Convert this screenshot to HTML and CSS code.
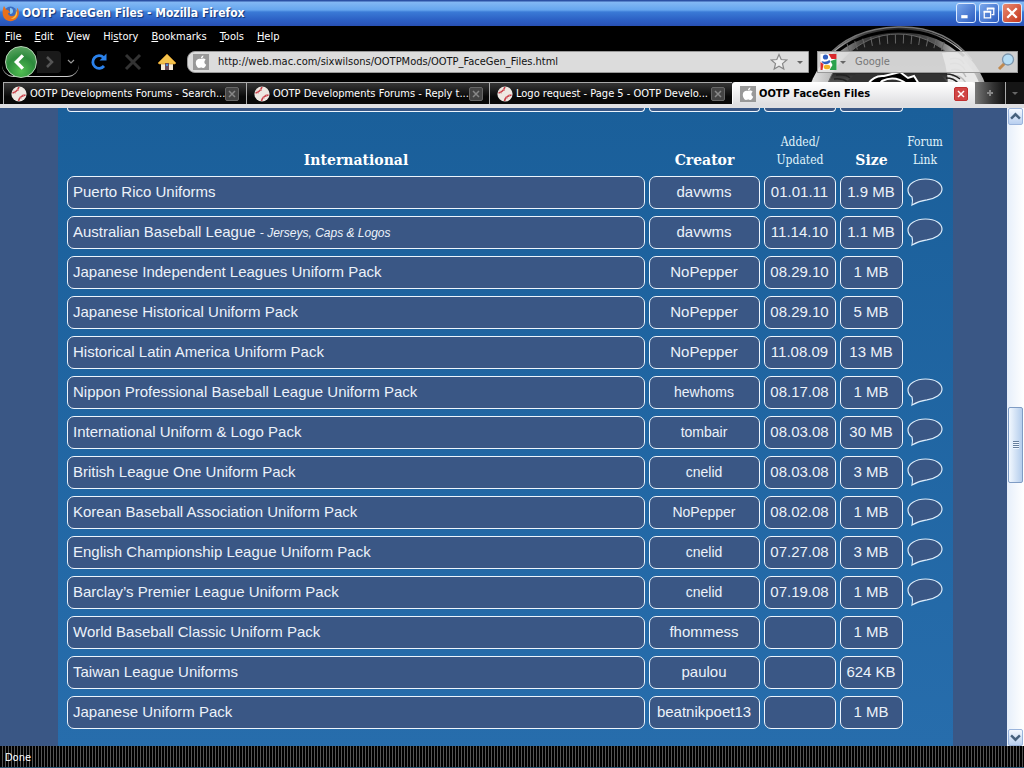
FILE: index.html
```
<!DOCTYPE html>
<html lang="en">
<head>
<meta charset="utf-8">
<title>OOTP FaceGen Files</title>
<link rel="stylesheet" href="styles.css">
</head>
<body>
<svg class="defs" aria-hidden="true">
  <symbol id="ball" viewBox="0 0 16 16"><circle cx="8" cy="8" r="7.6" fill="#eee8e2"/><path d="M1.500 7Q6 6 8 1M7.500 15Q8.500 10 14.500 9" fill="none" stroke="#c8404a" stroke-width="1.600"/><path d="M3 4.500l1.500 3M6 3l2 2M9 10l1.500 2.500M12 8l.8 2.500" stroke="#d88" stroke-width=".8"/></symbol>
  <symbol id="apple" viewBox="0 0 16 16"><rect width="16" height="16" fill="#999"/><path d="M8 5c1-.6 3.600-1 4.700.8-2 1.300-1.600 4 .5 4.900C12.500 12.500 11.500 14 10.300 14c-.9 0-1.300-.5-2.200-.5s-1.400.5-2.200.5C4.200 14 2.700 11 2.800 8.600 3 5 6 4.200 8 5zM8 4.300C7.900 2.800 9 1.600 10.400 1.400 10.500 3 9.400 4.200 8 4.300z" fill="#fff"/></symbol>
  <symbol id="bubble" viewBox="0 0 36 29"><path d="M5 27C5.600 24 5.800 21.500 5 19 2.500 17.300 1 15 1 12 1 6 8.500 1 18.500 1S35 5.500 35 11 28.500 20.500 20 21.800C14 22.500 9.500 24.300 5 27z" fill="#3a5785" stroke="#dcecfa" stroke-width="1.200"/></symbol>
</svg>
<div class="window">
  <header class="titlebar">
    <svg class="logo" viewBox="0 0 17 17"><circle cx="8.500" cy="8" r="6.500" fill="#3c6cc0"/><path d="M8 3q3 0 3 3t-3 3" fill="#8cc8f0"/><path d="M2 1C0 5 0 11 3 14s9 3 12-1 2-9 0-10c.6 4-.5 7-4 8-3 .6-5-1-5-3l2.500-.5L6 5 4 4.500z" fill="#e8701c"/><path d="M13.500 4c1.500 5-1 9-5 9.500 4 1.500 7-2 6.500-6z" fill="#fcc040"/></svg>
    <h1 class="title">OOTP FaceGen Files - Mozilla Firefox</h1>
    <button class="winbtn" aria-label="Minimize"><svg viewBox="0 0 17 17"><path d="M4 12h6" stroke="#fff" stroke-width="3"/></svg></button>
    <button class="winbtn" aria-label="Restore"><svg viewBox="0 0 17 17"><path d="M7 6V4h6v6h-2M4 7h6v6H4z" fill="none" stroke="#fff" stroke-width="1.200"/><path d="M3.500 7.500h7M6.500 4.500h7" stroke="#fff" stroke-width="1.600"/></svg></button>
    <button class="winbtn close" aria-label="Close"><svg viewBox="0 0 17 17"><path d="M4 4l9 9M13 4l-9 9" stroke="#fff" stroke-width="2.200"/></svg></button>
  </header>
  <div class="chrome">
    <svg class="persona" viewBox="0 0 224 78" aria-hidden="true">
      <defs>
        <linearGradient id="rim" x1="0" x2="1" y1="0" y2="0"><stop offset="0" stop-color="#eee"/><stop offset=".14" stop-color="#bbb"/><stop offset=".3" stop-color="#444"/><stop offset=".5" stop-color="#222"/><stop offset=".7" stop-color="#555"/><stop offset=".85" stop-color="#ddd"/><stop offset="1" stop-color="#999"/></linearGradient>
        <linearGradient id="dome" x1="0" x2="0" y1="0" y2="1"><stop offset="0" stop-color="#161616"/><stop offset=".25" stop-color="#2c2c2c"/><stop offset=".4" stop-color="#aaa"/><stop offset="1" stop-color="#ccc"/></linearGradient>
      </defs>
      <ellipse cx="98" cy="84" rx="92" ry="83" fill="url(#rim)"/>
      <path d="M24 34Q50 2 98 1T172 34" fill="none" stroke="#777" stroke-width="1.500"/>
      <path d="M32 30Q58 6 98 5T164 30" fill="none" stroke="#000" stroke-width="3"/>
      <ellipse cx="98" cy="88" rx="76" ry="80" fill="url(#dome)" stroke="#666"/>
      <path d="M48 22Q72 13 98 13T148 22" fill="none" stroke="#666" stroke-width="9" stroke-dasharray="1 7"/>
      <path d="M142 27Q160 24 164 34Q182 52 184 78H148Q150 50 142 27z" fill="#e8e8e8"/>
      <path d="M150 33q10-3 14 5M150 38q10-3 15 6M151 44q10-3 15 7M152 50q9-2 14 7" fill="none" stroke="#bbb" stroke-width="1.500"/>
      <path d="M36 49q10-1 14 3M34 53q8-1 14 3M146 48q8 0 14 5M146 52q8 0 12 5" fill="none" stroke="#222" stroke-width="1.500"/>
      <path d="M56 48h84l8 9H44z" fill="#333"/>
      <path d="M68 58Q74 49 84 50L100 46 108 52 114 50 119 58H107Q95 49 82 55L76 62z" fill="#000" stroke="#fff" stroke-width="2"/>
    </svg>
    <nav class="menu">
      <button><u>F</u>ile</button><button><u>E</u>dit</button><button><u>V</u>iew</button><button>Hi<u>s</u>tory</button><button><u>B</u>ookmarks</button><button><u>T</u>ools</button><button><u>H</u>elp</button>
    </nav>
    <div class="toolbar">
      <div class="history">
        <button class="back" aria-label="Back"><svg viewBox="0 0 32 32"><path d="M18 9l-7 7 7 7" fill="none" stroke="#fff" stroke-width="3.500"/></svg></button>
        <button class="fwd" aria-label="Forward"><svg viewBox="0 0 24 22"><path d="M10 6l5 5-5 5" fill="none" stroke="#555" stroke-width="2.500"/></svg></button>
        <button class="hist" aria-label="Recent pages"><svg viewBox="0 0 8 8"><path d="M1 2l3 3 3-3" fill="none" stroke="#999" stroke-width="1.200"/></svg></button>
      </div>
      <button class="tool" aria-label="Reload"><svg viewBox="0 0 18 18"><path d="M14 13A6.300 6.300 0 1 1 13.500 4.500" fill="none" stroke="#2b82ec" stroke-width="2.800"/><path d="M9.500 7.500h7V.5z" fill="#2b82ec"/></svg></button>
      <button class="tool" aria-label="Stop"><svg viewBox="0 0 18 18"><path d="M2 2l14 14M16 2L2 16" stroke="#333" stroke-width="3"/></svg></button>
      <button class="tool" aria-label="Home"><svg viewBox="0 0 18 18"><path d="M3 9h12v8H3z" fill="#f4ead8"/><path d="M0 10l9-9 9 9-1 1H1z" fill="#f4c24c" stroke="#c98a20" stroke-width=".6"/><path d="M7 10h4v7H7z" fill="#6a4a5a"/><path d="M8 11h2v2H8z" fill="#4a90d8"/></svg></button>
      <div class="urlbox">
        <svg class="site"><use href="#apple"/></svg>
        <input class="url" aria-label="Address" value="http://web.mac.com/sixwilsons/OOTPMods/OOTP_FaceGen_Files.html">
        <button class="star" aria-label="Bookmark"><svg viewBox="0 0 18 18"><path d="M9 1.500l2.200 5 5.500.5-4.200 3.600 1.300 5.400L9 13.200 4.200 16l1.300-5.400L1.300 7l5.500-.5z" fill="#eee" stroke="#888" stroke-width="1.200"/></svg></button>
        <button class="drop" aria-label="Show history"></button>
      </div>
      <div class="searchbox">
        <svg class="google" viewBox="0 0 16 16"><rect width="16" height="16" fill="#fff"/><path d="M8 0h8v5h-5z" fill="#d8282c"/><path d="M16 5v11H9l3-5-2-4z" fill="#2ba24c"/><path d="M0 8l3 2-1 6H0z" fill="#e03030"/><circle cx="5" cy="3" r="2.600" fill="#3160c0"/><path d="M1 7q4 2 8-1l1 2q-4 4-8 1z" fill="#3160c0"/><ellipse cx="6.500" cy="13" rx="3.300" ry="2.300" fill="#f0b428"/></svg>
        <button class="drop" aria-label="Choose engine"></button>
        <input class="query" aria-label="Search" placeholder="Google">
        <button class="go" aria-label="Search now"><svg viewBox="0 0 18 18"><path d="M2 16l6-6" stroke="#c08a50" stroke-width="3"/><circle cx="11" cy="6.500" r="5.500" fill="#b4dcf4" stroke="#7c95ac" stroke-width="1.300"/></svg></button>
      </div>
    </div>
    <div class="tabs">
      <div class="tab"><svg class="fav"><use href="#ball"/></svg><span>OOTP Developments Forums - Search...</span><button class="x" aria-label="Close tab"><svg viewBox="0 0 8 8"><path d="M1 1l6 6M7 1L1 7"/></svg></button></div>
      <div class="tab"><svg class="fav"><use href="#ball"/></svg><span>OOTP Developments Forums - Reply t...</span><button class="x" aria-label="Close tab"><svg viewBox="0 0 8 8"><path d="M1 1l6 6M7 1L1 7"/></svg></button></div>
      <div class="tab"><svg class="fav"><use href="#ball"/></svg><span>Logo request - Page 5 - OOTP Develo...</span><button class="x" aria-label="Close tab"><svg viewBox="0 0 8 8"><path d="M1 1l6 6M7 1L1 7"/></svg></button></div>
      <div class="tab active"><svg class="fav"><use href="#apple"/></svg><span>OOTP FaceGen Files</span><button class="x" aria-label="Close tab"><svg viewBox="0 0 8 8"><path d="M1 1l6 6M7 1L1 7"/></svg></button></div>
      <button class="newtab" aria-label="New tab"><svg viewBox="0 0 8 8"><path d="M4 1v6M1 4h6" stroke="#888" stroke-width="2"/></svg></button>
      <button class="alltabs drop" aria-label="List all tabs"></button>
    </div>
  </div>
  <div class="view">
    <main class="page">
      <div class="panel">
        <table class="files">
          <colgroup><col><col class="c-creator"><col class="c-date"><col class="c-size"><col class="c-link"></colgroup>
          <tbody><tr class="previous"><td></td><td></td><td></td><td></td><td class="bare"></td></tr></tbody>
          <tbody id="rows">
            <tr class="heads"><th>International</th><th>Creator</th><th class="small">Added/<br>Updated</th><th>Size</th><th class="small">Forum<br>Link</th></tr>
            <tr><td>Puerto Rico Uniforms</td><td>davwms</td><td>01.01.11</td><td>1.9 MB</td><td class="bare"><a href="#rows" aria-label="Forum"><svg><use href="#bubble"/></svg></a></td></tr>
            <tr><td>Australian Baseball League <em>- Jerseys, Caps &amp; Logos</em></td><td>davwms</td><td>11.14.10</td><td>1.1 MB</td><td class="bare"><a href="#rows" aria-label="Forum"><svg><use href="#bubble"/></svg></a></td></tr>
            <tr><td>Japanese Independent Leagues Uniform Pack</td><td>NoPepper</td><td>08.29.10</td><td>1 MB</td><td class="bare"></td></tr>
            <tr><td>Japanese Historical Uniform Pack</td><td>NoPepper</td><td>08.29.10</td><td>5 MB</td><td class="bare"></td></tr>
            <tr><td>Historical Latin America Uniform Pack</td><td>NoPepper</td><td>11.08.09</td><td>13 MB</td><td class="bare"></td></tr>
            <tr><td>Nippon Professional Baseball League Uniform Pack</td><td class="sm">hewhoms</td><td>08.17.08</td><td>1 MB</td><td class="bare"><a href="#rows" aria-label="Forum"><svg><use href="#bubble"/></svg></a></td></tr>
            <tr><td>International Uniform &amp; Logo Pack</td><td class="sm">tombair</td><td>08.03.08</td><td>30 MB</td><td class="bare"><a href="#rows" aria-label="Forum"><svg><use href="#bubble"/></svg></a></td></tr>
            <tr><td>British League One Uniform Pack</td><td class="sm">cnelid</td><td>08.03.08</td><td>3 MB</td><td class="bare"><a href="#rows" aria-label="Forum"><svg><use href="#bubble"/></svg></a></td></tr>
            <tr><td>Korean Baseball Association Uniform Pack</td><td class="sm">NoPepper</td><td>08.02.08</td><td>1 MB</td><td class="bare"><a href="#rows" aria-label="Forum"><svg><use href="#bubble"/></svg></a></td></tr>
            <tr><td>English Championship League Uniform Pack</td><td class="sm">cnelid</td><td>07.27.08</td><td>3 MB</td><td class="bare"><a href="#rows" aria-label="Forum"><svg><use href="#bubble"/></svg></a></td></tr>
            <tr><td>Barclay’s Premier League Uniform Pack</td><td class="sm">cnelid</td><td>07.19.08</td><td>1 MB</td><td class="bare"><a href="#rows" aria-label="Forum"><svg><use href="#bubble"/></svg></a></td></tr>
            <tr><td>World Baseball Classic Uniform Pack</td><td>fhommess</td><td></td><td>1 MB</td><td class="bare"></td></tr>
            <tr><td>Taiwan League Uniforms</td><td>paulou</td><td></td><td>624 KB</td><td class="bare"></td></tr>
            <tr><td>Japanese Uniform Pack</td><td>beatnikpoet13</td><td></td><td>1 MB</td><td class="bare"></td></tr>
          </tbody>
        </table>
      </div>
    </main>
    <div class="scroll">
      <button class="arrow" aria-label="Scroll up"><svg viewBox="0 0 10 10"><path d="M1 7l4-4 4 4"/></svg></button>
      <div class="gap-top"></div>
      <div class="thumb"><i></i></div>
      <div class="gap-bottom"></div>
      <button class="arrow" aria-label="Scroll down"><svg viewBox="0 0 10 10"><path d="M1 3l4 4 4-4"/></svg></button>
    </div>
  </div>
  <footer class="status">Done</footer>
</div>
</body>
</html>
```
FILE: styles.css
```
* { box-sizing: border-box; }
body { margin: 0; font: 11px/14px "DejaVu Sans Condensed", "DejaVu Sans", sans-serif; color: #fff; }
button { padding: 0; border: 0; background: none; color: inherit; font: inherit; }
button svg { display: block; }
input { min-width: 0; padding: 0; border: 0; background: none; font: inherit; }
.defs { position: absolute; width: 0; height: 0; }
.window { display: flex; flex-direction: column; height: 100vh; overflow: hidden; background: #000; }

.titlebar { display: flex; align-items: center; gap: 2px; height: 26px; flex: none; padding: 0 2px; background: linear-gradient(#2b50a4 0 1px, #83b8f4 2px, #65a5ee 10px, #3a7ad6 12px, #2c60c4 20px, #2850b4); }
.logo { width: 17px; height: 17px; flex: none; }
.title { flex: 1; margin: 0; padding-left: 1px; font: bold 12px/16px "DejaVu Sans Condensed", sans-serif; text-shadow: 1px 1px 1px #123478; }
.winbtn { width: 20px; height: 20px; margin-left: 1px; border: 1px solid #dceaff; border-radius: 3px; background: linear-gradient(135deg, #7aa8ec, #2c5cc0); }
.winbtn.close { background: linear-gradient(135deg, #e88a70, #c4361c); }

.chrome { position: relative; flex: none; border-bottom: 4px solid #dfdfe2; background: #000; }
.persona { position: absolute; right: 0; top: 0; width: 224px; height: 78px; }
.menu, .toolbar, .tabs { position: relative; display: flex; }
.menu { gap: 13px; height: 20px; padding: 1px 5px 0; align-items: center; }
.toolbar { align-items: center; height: 32px; padding: 0 6px 0 2px; }
.history { display: flex; align-items: center; width: 77px; height: 30px; border: solid #ccc; border-width: 0 0 1px; border-radius: 4px 4px 12px 12px; margin-right: 11px; }
.back { width: 32px; height: 32px; flex: none; margin-left: 3px; border: 1px solid #b8d8b8; border-radius: 50%; background: radial-gradient(circle at 50% 80%, #52c052, #2c8a3c 50%, #6cae70); }
.fwd { width: 24px; height: 22px; background: #1a1a1a; border-radius: 0 4px 4px 0; }
.hist { width: 8px; margin-left: 6px; }
.tool { width: 18px; margin-right: 16px; flex: none; }
.urlbox, .searchbox { display: flex; align-items: center; height: 22px; border: 1px solid #999; background: #dcdcdc; color: #000; }
.urlbox { flex: 1; margin-left: -5px; padding: 0 5px; border-radius: 8px 0 0 8px; }
.site { width: 16px; height: 16px; flex: none; margin-right: 9px; }
.url { flex: 1; color: #111; }
.star { width: 18px; margin-right: 9px; }
.drop::before { content: ""; display: block; width: 0; margin: 0 auto; border: 3px solid transparent; border-top-color: #666; border-bottom: 0; }
.searchbox { width: 201px; flex: none; margin-left: 8px; padding: 0 2px; background: #e4e4e4e6; }
.google { width: 17px; height: 16px; flex: none; margin-right: 3px; }
.query { flex: 1; margin-left: 9px; }
.query::placeholder { color: #777; opacity: 1; }
.go { width: 18px; }

.tabs { height: 26px; padding: 4px 0 0 3px; }
.tab { display: flex; align-items: center; flex: 1; min-width: 0; height: 22px; padding: 0 7px; border: solid #aaa; border-width: 1px 0 0 1px; background: linear-gradient(#363636, #080808 65%); white-space: nowrap; }
.fav { width: 16px; height: 16px; flex: none; margin-right: 3px; }
.tab span { flex: 1; }
.x { width: 14px; height: 14px; flex: none; padding: 2px; border: 1px solid #666; border-radius: 2px; background: #444; }
.x path { fill: none; stroke: #888; stroke-width: 1.500; }
.tab.active { border-color: #fff; border-radius: 3px 3px 0 0; background: linear-gradient(#fff, #dfdfe2); color: #000; font-weight: bold; }
.active .x { border-color: #c03030; background: #d04545; }
.active .x path { stroke: #fff; }
.newtab { display: grid; place-items: center; width: 31px; background: linear-gradient(90deg, #777, #333 60%, #111); border-right: 1px solid #aaa; }
.newtab svg { width: 8px; }
.alltabs { width: 18px; background: #151515; }

.view { display: flex; flex: 1; min-height: 0; }
.page { flex: 1; min-width: 0; overflow: hidden; padding: 0 54px 0 58px; background: #3a5785; }
.panel { display: flow-root; height: 100%; padding: 0 6px 0 5px; background: linear-gradient(#1a5f9a, #276dac); }
.files { width: 100%; margin-top: -7px; table-layout: fixed; border-collapse: separate; border-spacing: 4px 7px; color: #ecf2fa; font: 15px/17px "Liberation Sans", Arial, sans-serif; text-align: center; }
.c-creator { width: 111px; }
.c-date { width: 72px; }
.c-size { width: 63px; }
.c-link { width: 36px; }
.files td { height: 33px; padding: 0 1px 2px 0; border: 1px solid #ecf4fc; border-radius: 7px; background: #3a5785; white-space: nowrap; }
.files td:first-child { padding-left: 5px; text-align: left; }
.files td.bare { padding: 0; border: 0; background: none; }
.files td.sm { padding-bottom: 1px; font-size: 14px; }
.files em { font-size: 12px; line-height: 14px; }
.files .previous td { height: 4px; padding: 0; border-top: 0; border-radius: 0 0 5px 5px; }
.files th { height: 50px; padding: 0; vertical-align: bottom; color: #fff; font: bold 14px/18px "DejaVu Serif", serif; }
.files th.small { font: 12px/18px "DejaVu Serif Condensed", "DejaVu Serif", serif; color: #e0f4fa; white-space: nowrap; }
.bare a, .bare svg { display: block; width: 36px; height: 29px; }

.scroll { display: flex; flex-direction: column; width: 17px; flex: none; padding: 0 1px; background: linear-gradient(90deg, #e6effb, #fff); }
.arrow { height: 17px; flex: none; border: 1px solid #9ab4dc; border-radius: 2px; background: linear-gradient(#f4f9ff, #b8cff0); }
.arrow svg { width: 11px; margin: auto; }
.arrow path { fill: none; stroke: #45607c; stroke-width: 2.200; }
.gap-top { flex: 282; }
.gap-bottom { flex: 246; }
.thumb { display: grid; place-items: center; height: 76px; border: 1px solid #7f9cc4; border-radius: 2px; background: linear-gradient(90deg, #f2f8ff, #b4cdec); }
.thumb i { width: 6px; height: 8px; background: repeating-linear-gradient(#667f9e 0 1px, #eef6ff 1px 2px); }

.status { height: 22px; flex: none; padding: 5px; border-bottom: 1px solid #2c5878; background: repeating-linear-gradient(90deg, #000 0 2px, #555 2px 3px); }
```
